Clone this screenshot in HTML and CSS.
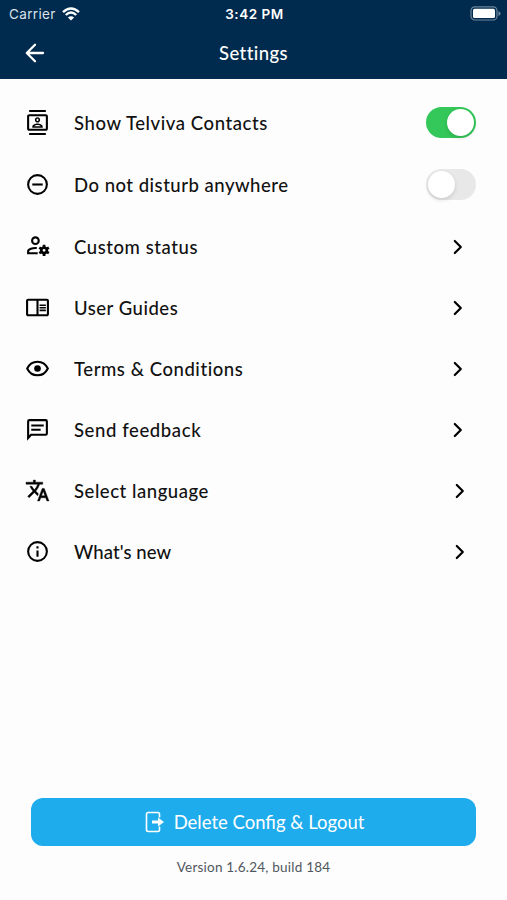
FILE: index.html
```
<!DOCTYPE html>
<html lang="en">
<head>
<meta charset="utf-8">
<title>Settings</title>
<link rel="stylesheet" href="styles.css">
</head>
<body>
<div class="app">
  <header class="header">
    <div class="status">
      <div class="carrier"><span>Carrier</span>
        <svg class="wifi" viewBox="0 0 18 14"><path d="M1 5.2Q9-2.4 17 5.2M3.8 8Q9 3 14.2 8" fill="none" stroke="#fff" stroke-width="2.4"/><path d="M9 13.6 5.9 10.5Q9 8 12.1 10.5Z" fill="#fff"/></svg>
      </div>
      <div class="time">3:42 PM</div>
      <svg class="battery" viewBox="0 0 32 15"><rect x="1" y=".8" width="26" height="13.2" rx="3.8" fill="none" stroke="#6d859b" stroke-width="1.2"/><rect x="3" y="2.8" width="22" height="9.2" rx="1.6" fill="#fff"/><path d="M28.4 5v5q2.2-1 2.2-2.5T28.4 5Z" fill="#6d859b"/></svg>
    </div>
    <div class="navbar">
      <svg class="back" viewBox="0 0 20 20"><path d="M18 10H2M10 1.8 1.8 10l8.2 8.2" fill="none" stroke="#fff" stroke-width="2.3" stroke-linecap="round" stroke-linejoin="round"/></svg>
      <h1 class="title">Settings</h1>
    </div>
  </header>
  <main class="list">
    <div class="row tall">
      <svg class="icon" viewBox="0 0 24 24"><path d="M20 4H4c-1.1 0-2 .9-2 2v12c0 1.100.9 2 2 2h16c1.100 0 2-.9 2-2V6c0-1.100-.9-2-2-2zm0 14H4V6h16v12zM4 0h16v2H4zM4 22h16v2H4zM12 12c1.380 0 2.500-1.120 2.500-2.500S13.380 7 12 7 9.500 8.120 9.500 9.500 10.620 12 12 12zm0-3.500c.55 0 1 .45 1 1s-.45 1-1 1-1-.45-1-1 .45-1 1-1zM17 16c0-2.100-3.310-3-5-3s-5 .9-5 3v1h10v-1zm-8.190-.5c.61-.52 2.030-1 3.190-1 1.170 0 2.590.48 3.200 1H8.810z"/></svg>
      <span class="label contacts">Show Telviva Contacts</span>
      <span class="toggle on"><span class="knob"></span></span>
    </div>
    <div class="row tall">
      <svg class="icon" viewBox="0 0 24 24"><circle cx="12" cy="12" r="9" fill="none" stroke="#000" stroke-width="2"/><path d="M7 11h10v2H7z"/></svg>
      <span class="label disturb">Do not disturb anywhere</span>
      <span class="toggle"><span class="knob"></span></span>
    </div>
    <div class="row">
      <svg class="icon" viewBox="0 0 24 24"><g fill="none" stroke="#000"><circle cx="10" cy="6.400" r="3.200" stroke-width="2"/><path d="M12.200 18.500H3V16.900C3 14.500 7.300 13.200 11.300 13.500" stroke-width="2"/><circle cx="18.300" cy="15.700" r="2.700" stroke-width="2.600"/><path d="M18.300 10.300v2M18.300 19.100v2M13.700 13.050l1.700 1M21.200 17.350l1.700 1M22.900 13.050l-1.700 1M15.400 17.350l-1.700 1" stroke-width="2.600"/></g></svg>
      <span class="label custom">Custom status</span>
      <svg class="chevron" viewBox="0 0 10 16"><path d="m1.800 2 6 6-6 6"/></svg>
    </div>
    <div class="row">
      <svg class="icon" viewBox="0 0 24 24"><path d="M21 4H3c-1.100 0-2 .9-2 2v13c0 1.100.9 2 2 2h18c1.100 0 2-.9 2-2V6c0-1.100-.9-2-2-2zM3 19V6h8v13H3zm18 0h-8V6h8v13zm-7-9.500h6V11h-6zm0 2.500h6v1.500h-6zm0 2.500h6V16h-6z" transform="translate(0 -.5)"/></svg>
      <span class="label guides">User Guides</span>
      <svg class="chevron" viewBox="0 0 10 16"><path d="m1.800 2 6 6-6 6"/></svg>
    </div>
    <div class="row">
      <svg class="icon" viewBox="0 0 24 24"><path d="M2.100 12C4 8 7.700 5.500 12 5.500S20 8 21.900 12C20 16 16.300 18.500 12 18.500S4 16 2.100 12Z" fill="none" stroke="#000" stroke-width="2"/><circle cx="12" cy="12" r="3.200"/></svg>
      <span class="label terms">Terms &amp; Conditions</span>
      <svg class="chevron" viewBox="0 0 10 16"><path d="m1.800 2 6 6-6 6"/></svg>
    </div>
    <div class="row">
      <svg class="icon" viewBox="0 0 24 24"><path d="M3 20.200V4.200q0-1.200 1.200-1.200h15.600q1.200 0 1.200 1.200v11.600q0 1.200-1.200 1.200H5.800Z" fill="none" stroke="#000" stroke-width="2"/><path d="M6 7.100h12v1.900H6zM6 11.200h9v1.900H6z"/></svg>
      <span class="label feedback">Send feedback</span>
      <svg class="chevron" viewBox="0 0 10 16"><path d="m1.800 2 6 6-6 6"/></svg>
    </div>
    <div class="row">
      <svg class="icon" viewBox="0 0 24 24"><path d="M12.870 15.070l-2.540-2.510.03-.03c1.740-1.940 2.980-4.170 3.710-6.530H17V4h-7V2H8v2H1v1.990h11.170C11.500 7.920 10.440 9.750 9 11.350 8.070 10.320 7.300 9.190 6.690 8h-2c.73 1.630 1.730 3.170 2.980 4.560l-5.090 5.020L4 19l5-5 3.110 3.110.76-2.040zM18.500 10h-2L12 22h2l1.120-3h4.750L21 22h2l-4.500-12zm-2.620 7l1.620-4.330L19.120 17h-3.240z" stroke="#000" stroke-width=".4"/></svg>
      <span class="label language">Select language</span>
      <svg class="chevron shifted" viewBox="0 0 10 16"><path d="m1.800 2 6 6-6 6"/></svg>
    </div>
    <div class="row">
      <svg class="icon" viewBox="0 0 24 24"><circle cx="12" cy="12" r="9" fill="none" stroke="#000" stroke-width="2"/><path d="M11 7h2v2h-2zM11 11h2v6h-2z"/></svg>
      <span class="label news">What's new</span>
      <svg class="chevron shifted" viewBox="0 0 10 16"><path d="m1.800 2 6 6-6 6"/></svg>
    </div>
  </main>
  <footer class="footer">
    <button class="logout">
      <svg class="exit" viewBox="0 0 20 22"><path d="M14.500 6.500V3.200q0-1.700-1.700-1.700H3.200Q1.500 1.500 1.500 3.200v15.600q0 1.700 1.700 1.700h9.600q1.700 0 1.700-1.700V15.500" fill="none" stroke="#fff" stroke-width="1.600"/><path d="M7 9.500h6V6.600L19 11l-6 4.400v-2.900H7Z" fill="#fff"/></svg>
      <span>Delete Config &amp; Logout</span>
    </button>
    <div class="version">Version 1.6.24, build 184</div>
  </footer>
</div>
</body>
</html>
```

FILE: styles.css
```
* { box-sizing: border-box; }
body { margin: 0; background: #fdfdfd; font-family: Lato, "Noto Sans", sans-serif; color: #111; }
.app { height: 900px; display: flex; flex-direction: column; white-space: nowrap; }
.header { height: 79px; background: #002b4e; color: #fff; }
.status { height: 27px; display: grid; grid-template-columns: 1fr auto 1fr; align-items: center; padding: 0 7px 0 9px; font-family: Inter, sans-serif; font-size: 13.5px; }
.carrier { display: flex; align-items: center; gap: 6px; color: #d9e2ea; letter-spacing: .35px; }
.wifi { width: 18px; height: 14px; }
.time { font-size: 13.5px; font-weight: 600; letter-spacing: .55px; }
.battery { width: 32px; height: 15px; justify-self: end; margin-right: -2px; }
.navbar { height: 52px; display: grid; grid-template-columns: 1fr auto 1fr; align-items: center; padding: 0 25px; }
.back { width: 20px; height: 20px; }
.title { margin: 0; font-size: 18.5px; font-weight: 500; letter-spacing: .4px; }
.list { padding: 12px 31px 0 25px; }
.row { height: 61px; display: flex; align-items: center; }
.row.tall { height: 62.3px; }
.icon { width: 25px; height: 25px; flex: none; }
.label { margin-left: 24px; padding-top: 1px; font-size: 18.5px; font-weight: 500; flex: 1; }
.contacts { letter-spacing: .58px; }
.disturb { letter-spacing: .5px; }
.custom { letter-spacing: .57px; }
.guides { letter-spacing: .52px; }
.terms { letter-spacing: .56px; }
.feedback { letter-spacing: .6px; }
.language { letter-spacing: .54px; }
.news { letter-spacing: .1px; }
.toggle { width: 50px; height: 31px; border-radius: 16px; background: #e8e8e8; padding: 2px; display: flex; }
.toggle.on { background: #34c759; justify-content: flex-end; }
.knob { width: 27px; height: 27px; border-radius: 50%; background: #fff; box-shadow: 0 2px 4px rgba(0,0,0,.13); }
.chevron { width: 10px; height: 16px; margin: 1px 13px 0 0; fill: none; stroke: #000; stroke-width: 2.2; stroke-linecap: round; stroke-linejoin: round; }
.chevron.shifted { margin-right: 11px; }
.footer { margin-top: auto; height: 102px; padding: 0 31px; }
.logout { width: 100%; height: 48px; border: 0; border-radius: 12px; background: #1facec; color: #fff; font-family: inherit; font-size: 18.5px; letter-spacing: 0; display: flex; align-items: center; justify-content: center; gap: 9px; padding: 0 0 0 2px; }
.exit { width: 20px; height: 22px; }
.version { margin-top: 12px; text-align: center; font-size: 13.5px; line-height: 18px; color: #50575d; letter-spacing: .22px; }
```
